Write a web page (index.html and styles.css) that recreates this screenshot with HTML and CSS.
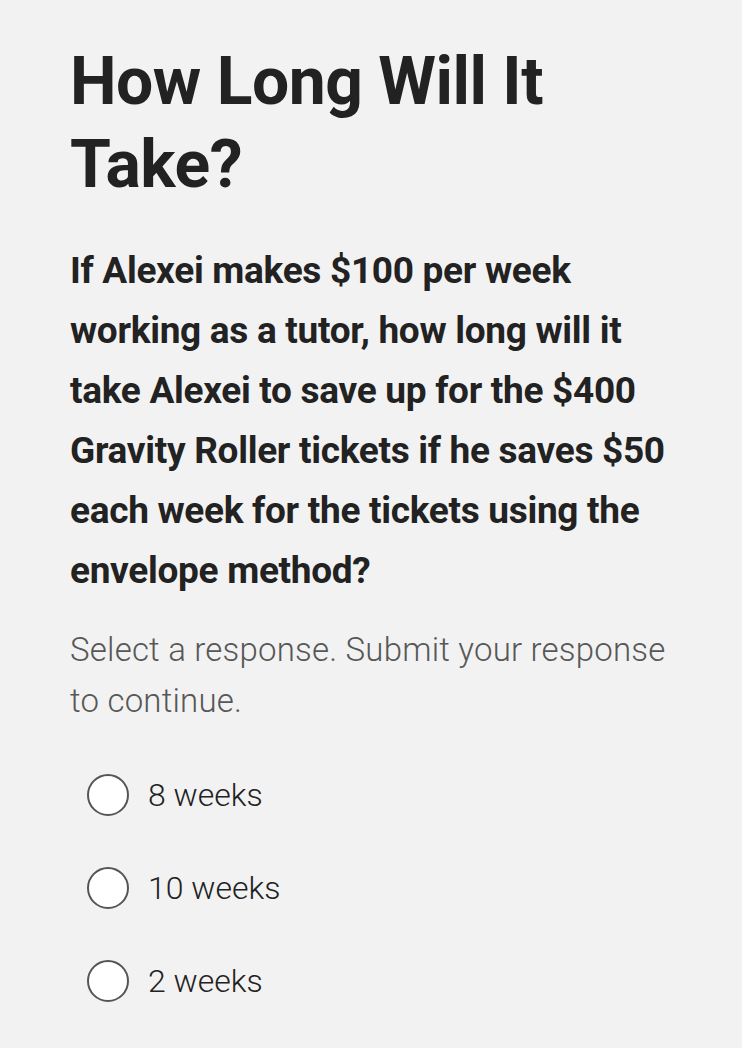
FILE: index.html
```html
<!doctype html>
<html lang="en">
<head>
	<meta charset="UTF-8">
	<title>How Long Will It Take?</title>
	<link rel="stylesheet" href="styles.css">
</head>
<body>
<div class="main">
	<h1 class="title">How Long Will It Take?</h1>
	<p class="question">If Alexei makes $100 per week working as a tutor, how long will it take Alexei to save up for the $400 Gravity Roller tickets if he saves $50 each week for the tickets using the envelope method?</p>
	<p class="hint">Select a response. Submit your response to continue.</p>
	<div class="options">
		<label class="option"><span class="radio"></span><span class="label">8 weeks</span></label>
		<label class="option"><span class="radio"></span><span class="label">10 weeks</span></label>
		<label class="option"><span class="radio"></span><span class="label">2 weeks</span></label>
	</div>
</div>
</body>
</html>
```

FILE: styles.css
```css
body
{
	margin: 0;
	background-color: #f2f2f2;
	color: #222222;
	font-family: Roboto, "Liberation Sans", sans-serif;
}

.main
{
	padding: 40px 48px 0 70px;
}

.title
{
	font-size: 66px;
	line-height: 83px;
	font-weight: 700;
	letter-spacing: -0.5px;
	margin: 0 0 35px 0;
}

.question
{
	font-size: 37px;
	line-height: 60px;
	font-weight: 700;
	letter-spacing: -0.3px;
	margin: 0 0 23px 0;
}

.hint
{
	font-size: 33px;
	line-height: 51px;
	font-weight: 300;
	color: #575757;
	letter-spacing: 0.2px;
	margin: 0 0 48px 0;
}

.options
{
	display: flex;
	flex-direction: column;
	gap: 51px;
	padding-left: 17px;
}

.option
{
	display: flex;
	align-items: center;
	gap: 19px;
	font-size: 32px;
	line-height: 42px;
	font-weight: 300;
}

.radio
{
	width: 38px;
	height: 38px;
	border: 2px solid #555555;
	border-radius: 50%;
	background-color: #ffffff;
}
```
